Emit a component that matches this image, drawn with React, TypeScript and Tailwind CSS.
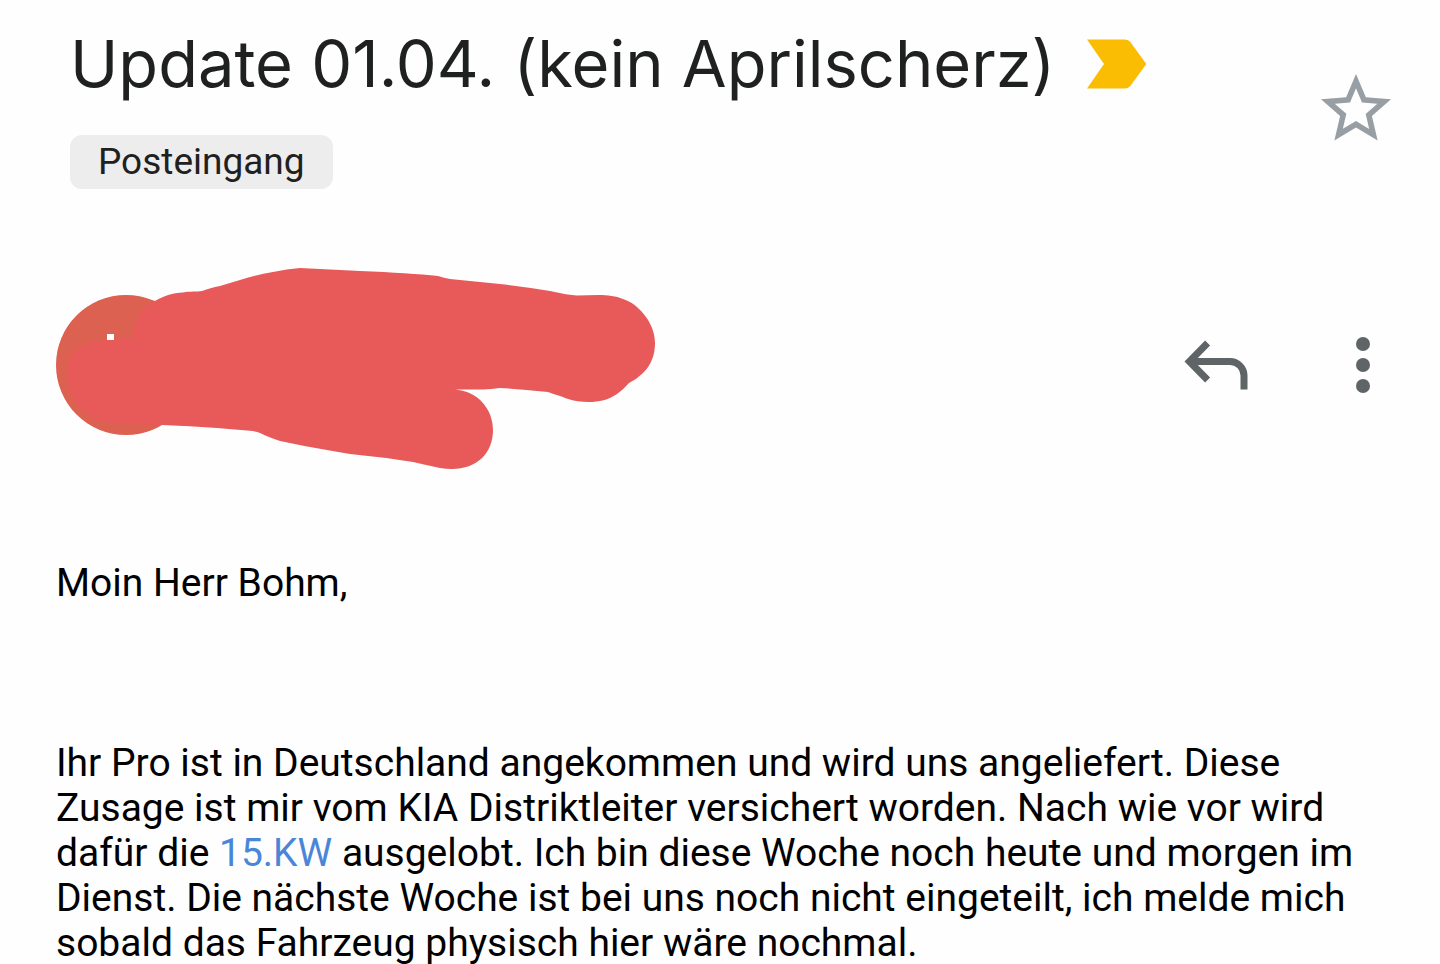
import { useState } from 'react'

const BODY = {
  greeting: 'Moin Herr Bohm,',
  beforeDate: 'Ihr Pro ist in Deutschland angekommen und wird uns angeliefert. Diese Zusage ist mir vom KIA Distriktleiter versichert worden. Nach wie vor wird dafür die ',
  date: '15.KW',
  afterDate: ' ausgelobt. Ich bin diese Woche noch heute und morgen im Dienst. Die nächste Woche ist bei uns noch nicht eingeteilt, ich melde mich sobald das Fahrzeug physisch hier wäre nochmal.',
}

function ImportantMarker() {
  return (
    <svg className="h-[50px] w-[60px] shrink-0" viewBox="0 0 60 50" fill="#fabd03" aria-hidden="true">
      <path d="M0 .5H38Q41.500 .5 43.500 3.200L59.300 25 43.500 46.800Q41.500 49.500 38 49.500H0L17 25Z" />
    </svg>
  )
}

function StarIcon({ filled }: { filled: boolean }) {
  return (
    <svg className="size-[84px]" viewBox="0 0 24 24" fill="#979fa5" aria-hidden="true">
      <path d="M22 9.240l-7.190-.62L12 2 9.190 8.630 2 9.240l5.460 4.730L5.820 21 12 17.270 18.180 21l-1.630-7.030L22 9.240zM12 15.400l-3.760 2.270 1-4.280-3.320-2.880 4.380-.38L12 6.100l1.710 4.040 4.380.38-3.320 2.880 1 4.280L12 15.400z" />
      {filled && <path d="M12 5l2 4.500 5 .5-4 3.500 1 5-4-2.500-4 2.500 1-5-4-3.500 5-.5z" />}
    </svg>
  )
}

function ReplyIcon() {
  return (
    <svg className="size-[84px]" viewBox="0 0 24 24" fill="none" stroke="#5f6467" strokeWidth="2" aria-hidden="true">
      <path d="M9.600 5.700L4.400 11l5.200 5.300" />
      <path d="M4.400 11H16a4 4 0 0 1 4 4v4" />
    </svg>
  )
}

function MoreIcon() {
  return (
    <svg className="size-[84px]" viewBox="0 0 24 24" fill="#5f6467" aria-hidden="true">
      <circle cx="12" cy="6" r="2" />
      <circle cx="12" cy="12" r="2" />
      <circle cx="12" cy="18" r="2" />
    </svg>
  )
}

// Avatar with the sender details painted over
function Sender() {
  return (
    <svg className="h-[210px] w-[600px] shrink-0" viewBox="56 260 600 210" aria-hidden="true">
      <circle cx="126" cy="365" r="70" fill="#dd6150" />
      <path
        fill="#e85959"
        d="M155 301C163 296 173 293 183 292.500C190 291 197 292 202 291C208 289 213 287 220 286Q230 283 240 280C252 276 262 274 273 272Q287 269 300 268L360 271Q410 273 438 276Q444 278 450 279L500 284Q527 287 550 291Q568 295 577 295.500Q588 295 598 295C608 295 616 296 623 299Q632 302 638 308C648 317 655 330 655 343C655 355 651 365 643 373Q637 379 629 383Q624 389 617 394C608 400 600 402 588 402C577 402 567 399 560 396Q553 394 548 392Q520 389 500 388Q491 389 483 389.500L455 389.500Q462 390 467 392C483 398 493 413 493 430C493 453 477 469 452 469Q446 469 440 468Q426 465 413 462Q382 457 350 454Q338 452 327 450Q303 446 280 441Q268 437 260 433Q257 432 253 431L217 428Q190 426 162 425C130 424 112 425 95 419C79 411 67 395 67 372C67 351 82 343 102 341Q118 338 133 338Q134 320 142 311Q147 304 155 301Z"
      />
      <rect x="107" y="334" width="7" height="6" fill="#fff" />
    </svg>
  )
}

export default function App() {
  const [starred, setStarred] = useState(false)

  return (
    <main className="min-h-screen bg-[#fefefe] font-['Roboto',sans-serif] text-black">
      {/* Subject */}
      <header className="flex items-start justify-between pl-[70px] pr-[42px]">
        <div className="pt-6">
          <div className="flex items-center gap-8">
            <h1 className="font-['Inter',sans-serif] text-[65px] leading-[79px] text-[#1f2121]">
              Update 01.04. (kein Aprilscherz)
            </h1>
            <ImportantMarker />
          </div>
          <button className="mt-8 flex h-[54px] items-center rounded-xl bg-[#ededed] px-7 text-[37px] text-[#1f2121]">
            Posteingang
          </button>
        </div>
        <button
          className="mt-[67px] shrink-0"
          aria-label="Markieren"
          aria-pressed={starred}
          onClick={() => setStarred(!starred)}>
          <StarIcon filled={starred} />
        </button>
      </header>

      {/* Sender */}
      <section className="mt-[71px] flex items-center justify-between pl-14 pr-[35px]">
        <Sender />
        <div className="flex items-center gap-[63px]">
          <button aria-label="Antworten"><ReplyIcon /></button>
          <button aria-label="Weitere Optionen"><MoreIcon /></button>
        </div>
      </section>

      {/* Message */}
      <article className="mt-[91px] px-14 text-[39px] leading-[45px]">
        <p>{BODY.greeting}</p>
        <p className="mt-[135px]">
          {BODY.beforeDate}
          <a href="#termin" className="text-[#4a86d8]">{BODY.date}</a>
          {BODY.afterDate}
        </p>
      </article>
    </main>
  )
}
